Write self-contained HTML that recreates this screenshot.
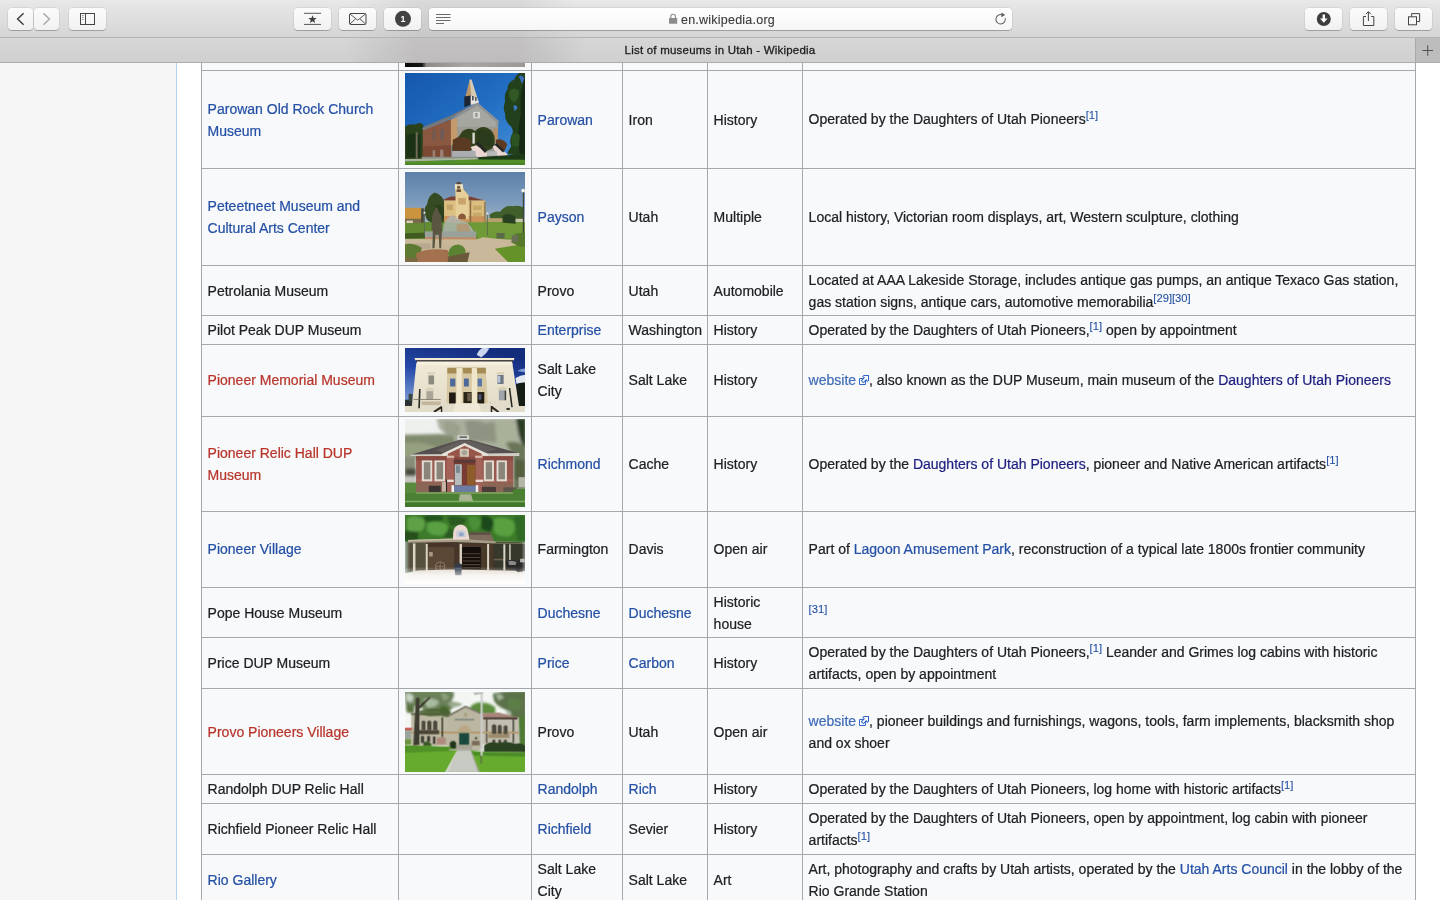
<!DOCTYPE html>
<html lang="en">
<head>
<meta charset="utf-8">
<title>List of museums in Utah - Wikipedia</title>
<style>
html,body{margin:0;padding:0;}
body{width:1440px;height:900px;overflow:hidden;position:relative;background:#fff;font-family:"Liberation Sans",Arial,Helvetica,sans-serif;color:#202122;}
/* ---------- browser chrome ---------- */
#toolbar{will-change:transform;position:absolute;left:0;top:0;width:1440px;height:37px;background:linear-gradient(#e9e9e9 0,#e6e6e6 4px,#d6d6d6 36px);border-bottom:1px solid #b4b4b4;box-sizing:content-box;}
.btn{position:absolute;top:8px;height:22px;box-sizing:border-box;border-radius:4px;background:linear-gradient(#fcfcfc,#f1f1f1);box-shadow:0 0 0 0.5px rgba(0,0,0,.12),0 1px 0.5px rgba(0,0,0,.22);}
.btn svg{position:absolute;left:0;top:0;}
#urlbar{position:absolute;left:429px;top:8px;width:583px;height:22px;border-radius:4px;background:linear-gradient(#ffffff,#f6f6f6);box-shadow:0 0 0 0.5px rgba(0,0,0,.12),0 1px 0.5px rgba(0,0,0,.22);}
#urltext{position:absolute;left:0;top:1px;width:100%;height:22px;line-height:22px;text-align:center;font-size:12.5px;letter-spacing:0.23px;color:#3a3a3a;text-indent:15px;-webkit-text-stroke:0.12px;}
#badge1{position:absolute;left:395px;top:11px;width:16px;height:16px;line-height:16px;text-align:center;color:#fff;font-size:9px;font-weight:bold;}
#tabbar{will-change:transform;position:absolute;left:0;top:38px;width:1440px;height:24px;background:linear-gradient(#d6d6d6,#d0d0d0);border-bottom:1px solid #acacac;}
#tabtitle{position:absolute;left:0;top:0;width:1440px;height:24px;line-height:24px;text-align:center;font-size:11.5px;letter-spacing:0.21px;color:#1e1e1e;-webkit-text-stroke:0.3px;}
#newtab{position:absolute;right:0;top:0;width:25px;height:24px;background:#bdbdbd;border-left:1px solid #a9a9a9;box-sizing:border-box;}
/* ---------- page ---------- */
#page{position:absolute;left:0;top:63px;width:1440px;height:837px;background:#f6f6f6;overflow:hidden;}
#content{position:absolute;left:176px;top:0;width:1264px;height:837px;background:#fff;border-left:1px solid #b4d5f1;box-sizing:border-box;}
table.wt{position:absolute;left:201px;top:-30px;width:1214px;border-collapse:collapse;table-layout:fixed;background:#f8f9fa;font-size:14px;line-height:22px;color:#202122;will-change:transform;-webkit-text-stroke:0.22px;}
table.wt td{border:1px solid #a4a7ab;padding:0 5.6px;vertical-align:middle;box-sizing:border-box;overflow:hidden;}
svg.ph{position:absolute;display:block;overflow:hidden;}
a{color:#2450a6;text-decoration:none;}
a.new{color:#b8342a;}
a.vis{color:#1e1e80;}
a.ext{color:#416cb8;}
svg.xi{display:inline-block;margin-left:2px;margin-right:-1px;vertical-align:-1.5px;}
tr.up1 td{padding-bottom:2px;}
sup{font-size:11.2px;line-height:1;vertical-align:super;position:relative;top:1px;-webkit-text-stroke:0.1px;}
</style>
</head>
<body>
<div id="page">
<div id="content"></div>
<table class="wt">
<colgroup><col style="width:197px"><col style="width:133px"><col style="width:91px"><col style="width:85px"><col style="width:95px"><col style="width:613px"></colgroup>
<tr style="height:37px"><td></td><td></td><td></td><td></td><td></td><td></td></tr>
<tr style="height:98px"><td><a>Parowan Old Rock Church Museum</a></td><td></td><td><a>Parowan</a></td><td>Iron</td><td>History</td><td style="padding-bottom:2px">Operated by the Daughters of Utah Pioneers<sup><a>[1]</a></sup></td></tr>
<tr style="height:97px"><td><a>Peteetneet Museum and Cultural Arts Center</a></td><td></td><td><a>Payson</a></td><td>Utah</td><td>Multiple</td><td>Local history, Victorian room displays, art, Western sculpture, clothing</td></tr>
<tr style="height:50px"><td>Petrolania Museum</td><td></td><td>Provo</td><td>Utah</td><td>Automobile</td><td>Located at AAA Lakeside Storage, includes antique gas pumps, an antique Texaco Gas station, gas station signs, antique cars, automotive memorabilia<sup><a>[29]</a></sup><sup><a>[30]</a></sup></td></tr>
<tr style="height:29px"><td>Pilot Peak DUP Museum</td><td></td><td><a>Enterprise</a></td><td>Washington</td><td>History</td><td>Operated by the Daughters of Utah Pioneers,<sup><a>[1]</a></sup> open by appointment</td></tr>
<tr class="up1" style="height:72px"><td><a class="new">Pioneer Memorial Museum</a></td><td></td><td>Salt Lake City</td><td>Salt Lake</td><td>History</td><td><a class="ext">website<svg class="xi" width="12" height="12" viewBox="0 0 12 12"><path fill="#fff" stroke="#36c" d="M1.5 4.518h5.982V10.500H1.500z"/><path fill="#36c" d="M5.765 1H11v5.390L9.427 7.937l-1.310-1.310L5.393 9.350l-2.690-2.688 2.810-2.808L4.200 2.544z"/><path fill="#fff" d="M9.995 2.004l.022 4.885L8.200 5.070 5.320 7.950 4.090 6.723l2.882-2.880-1.850-1.852z"/></svg></a>, also known as the DUP Museum, main museum of the <a class="vis">Daughters of Utah Pioneers</a></td></tr>
<tr style="height:95px"><td><a class="new">Pioneer Relic Hall DUP Museum</a></td><td></td><td><a>Richmond</a></td><td>Cache</td><td>History</td><td>Operated by the <a class="vis">Daughters of Utah Pioneers</a>, pioneer and Native American artifacts<sup><a>[1]</a></sup></td></tr>
<tr class="up1" style="height:76px"><td><a>Pioneer Village</a></td><td></td><td>Farmington</td><td>Davis</td><td>Open air</td><td>Part of <a>Lagoon Amusement Park</a>, reconstruction of a typical late 1800s frontier community</td></tr>
<tr style="height:50px"><td>Pope House Museum</td><td></td><td><a>Duchesne</a></td><td><a>Duchesne</a></td><td>Historic house</td><td><sup><a>[31]</a></sup></td></tr>
<tr style="height:51px"><td>Price DUP Museum</td><td></td><td><a>Price</a></td><td><a>Carbon</a></td><td>History</td><td>Operated by the Daughters of Utah Pioneers,<sup><a>[1]</a></sup> Leander and Grimes log cabins with historic artifacts, open by appointment</td></tr>
<tr style="height:86px"><td><a class="new">Provo Pioneers Village</a></td><td></td><td>Provo</td><td>Utah</td><td>Open air</td><td><a class="ext">website<svg class="xi" width="12" height="12" viewBox="0 0 12 12"><path fill="#fff" stroke="#36c" d="M1.5 4.518h5.982V10.500H1.500z"/><path fill="#36c" d="M5.765 1H11v5.390L9.427 7.937l-1.310-1.310L5.393 9.350l-2.690-2.688 2.810-2.808L4.200 2.544z"/><path fill="#fff" d="M9.995 2.004l.022 4.885L8.200 5.070 5.320 7.950 4.090 6.723l2.882-2.880-1.850-1.852z"/></svg></a>, pioneer buildings and furnishings, wagons, tools, farm implements, blacksmith shop and ox shoer</td></tr>
<tr style="height:29px"><td>Randolph DUP Relic Hall</td><td></td><td><a>Randolph</a></td><td><a>Rich</a></td><td>History</td><td>Operated by the Daughters of Utah Pioneers, log home with historic artifacts<sup><a>[1]</a></sup></td></tr>
<tr style="height:51px"><td>Richfield Pioneer Relic Hall</td><td></td><td><a>Richfield</a></td><td>Sevier</td><td>History</td><td>Operated by the Daughters of Utah Pioneers, open by appointment, log cabin with pioneer artifacts<sup><a>[1]</a></sup></td></tr>
<tr style="height:51px"><td><a>Rio Gallery</a></td><td></td><td>Salt Lake City</td><td>Salt Lake</td><td>Art</td><td>Art, photography and crafts by Utah artists, operated by the <a>Utah Arts Council</a> in the lobby of the Rio Grande Station</td></tr>
</table>
<!--IMG0--><svg class="ph" style="left:405px;top:0px" width="120" height="4" viewBox="0 0 120 4" preserveAspectRatio="none">
<defs><linearGradient id="g0" x1="0" y1="0" x2="1" y2="0"><stop offset="0" stop-color="#080808"/><stop offset="0.14" stop-color="#141414"/><stop offset="0.18" stop-color="#8e8a89"/><stop offset="0.5" stop-color="#aaa5a3"/><stop offset="1" stop-color="#9c9896"/></linearGradient></defs>
<rect width="120" height="4" fill="url(#g0)"/>
</svg><!--/IMG0-->
<!--IMG1--><svg class="ph" style="left:405px;top:10px" width="120" height="92" viewBox="47 30 1100 840" preserveAspectRatio="none">
<defs>
<linearGradient id="sky1" x1="0" y1="0" x2="1" y2="1"><stop offset="0" stop-color="#1458ad"/><stop offset="0.55" stop-color="#2470c4"/><stop offset="1" stop-color="#4a92dc"/></linearGradient>
<filter id="b1" x="-5%" y="-5%" width="110%" height="110%"><feGaussianBlur stdDeviation="5"/></filter>
</defs>
<rect x="47" y="30" width="1100" height="840" fill="url(#sky1)"/>
<g filter="url(#b1)">
<!-- left trees -->
<path d="M40 520 Q90 490 140 500 Q190 470 215 505 L215 815 L40 815Z" fill="#29421e"/>
<path d="M60 600 Q120 560 190 600 L190 800 L60 800Z" fill="#1e3217"/>
<rect x="145" y="570" width="18" height="240" fill="#6f6a58"/>
<!-- right tree -->
<path d="M1160 20 L1100 28 Q1060 50 1050 90 Q990 110 985 180 Q950 230 965 290 Q940 350 965 400 Q960 460 1000 500 Q1050 540 1030 590 Q1000 640 1020 700 Q990 740 985 770 L1160 795Z" fill="#223f1a"/>
<path d="M1160 60 Q1090 180 1110 400 Q1070 560 1095 760 L1160 785Z" fill="#172c12"/>
<path d="M1000 200 Q1040 150 1090 190 Q1100 260 1050 300 Q1000 290 1000 200Z" fill="#335826"/>
<path d="M1020 600 Q1060 560 1100 600 L1090 700 L1030 700Z" fill="#2f5222"/>
<path d="M1090 60 Q1120 40 1140 80 L1120 130Z" fill="#3a6eb8"/>
<path d="M1040 330 Q1070 310 1080 350 L1050 380Z" fill="#3a78c4"/>
<!-- steeple -->
<polygon points="640,88 658,92 722,292 700,300 600,320" fill="#d6c9b4"/>
<polygon points="640,95 655,240 600,250" fill="#b89468"/>
<polygon points="590,245 650,235 650,320 590,342" fill="#1f2632"/>
<polygon points="650,235 722,285 722,310 650,322" fill="#e9e6df"/>
<rect x="662" y="240" width="14" height="40" fill="#3a4250"/>
<rect x="690" y="250" width="12" height="36" fill="#3a4250"/>
<!-- front gable wall -->
<polygon points="470,455 712,318 902,482 895,800 470,800" fill="#9b9b93"/>
<polygon points="520,440 712,330 880,470 880,520 520,520" fill="#a5a6a0"/>
<!-- roof edge -->
<polygon points="205,535 470,425 712,300 912,470 900,490 712,325 520,425 215,555" fill="#8e9296"/>
<polygon points="215,520 470,415 700,300 470,440 215,545" fill="#6d747a"/>
<!-- side brick wall -->
<polygon points="210,552 470,452 470,812 210,812" fill="#8a583f"/>
<polygon points="210,700 470,690 470,812 210,812" fill="#7b4a36"/>
<rect x="300" y="545" width="26" height="100" fill="#6f5a52"/>
<rect x="372" y="540" width="32" height="100" fill="#6c5a56"/>
<rect x="300" y="735" width="24" height="70" fill="#9a7f74"/>
<rect x="368" y="730" width="32" height="75" fill="#9a7f74"/>
<!-- corner pilaster -->
<polygon points="468,455 525,440 525,640 468,700" fill="#c59a6b"/>
<rect x="855" y="540" width="40" height="110" fill="#b98e62"/>
<!-- gable window -->
<rect x="672" y="385" width="62" height="58" fill="#d7d7d2"/>
<rect x="690" y="395" width="22" height="36" fill="#8f9496"/>
<!-- bushes -->
<path d="M575 560 Q640 520 690 560 Q740 505 800 530 Q870 560 870 640 Q880 720 800 740 L700 700 L640 740 L480 740 Q470 650 540 610Z" fill="#32401f"/>
<path d="M485 640 Q560 590 650 640 L650 740 L485 740Z" fill="#5a3a22"/>
<path d="M880 640 Q940 620 985 680 L960 740 L880 720Z" fill="#5b3a24"/>
<path d="M700 560 Q780 520 850 600 L850 700 L720 690Z" fill="#2a3a1b"/>
<rect x="665" y="575" width="22" height="100" fill="#d9d9d4"/>
<!-- stairs -->
<polygon points="648,705 700,690 800,760 800,800 705,800" fill="#ead6d2"/>
<polygon points="690,665 715,660 800,735 780,760" fill="#262626"/>
<polygon points="850,700 880,690 985,770 985,790 900,795" fill="#ead6d2"/>
<polygon points="865,680 890,675 960,740 945,755" fill="#262626"/>
<!-- porch / fence -->
<rect x="480" y="742" width="215" height="58" fill="#a9adb0"/>
<rect x="800" y="745" width="90" height="40" fill="#b7babb"/>
<!-- hedge -->
<path d="M700 800 L1160 770 L1160 830 L700 825Z" fill="#1f3a18"/>
<rect x="200" y="795" width="520" height="30" fill="#8a8f86"/>
<!-- sidewalk + grass -->
<polygon points="40,815 700,805 700,822 40,840" fill="#a9b59a"/>
<polygon points="40,838 700,820 1160,822 1160,880 40,880" fill="#558f2b"/>
<polygon points="40,858 1160,850 1160,880 40,880" fill="#4a8526"/>
</g>
</svg><!--/IMG1-->
<!--IMG2--><svg class="ph" style="left:405px;top:109px" width="120" height="90" viewBox="47 38 1100 822" preserveAspectRatio="none">
<defs>
<linearGradient id="sky2" x1="0" y1="0" x2="0" y2="1"><stop offset="0" stop-color="#5d80aa"/><stop offset="0.35" stop-color="#7e9cbc"/><stop offset="0.6" stop-color="#a6b8ca"/></linearGradient>
<filter id="b2" x="-5%" y="-5%" width="110%" height="110%"><feGaussianBlur stdDeviation="5"/></filter>
</defs>
<rect x="47" y="38" width="1100" height="822" fill="url(#sky2)"/>
<g filter="url(#b2)">
<!-- lawn -->
<rect x="40" y="640" width="1120" height="230" fill="#c6b698"/>
<rect x="40" y="495" width="1120" height="160" fill="#648c32"/>
<path d="M640 500 L1160 495 L1160 640 L900 650 L720 640Z" fill="#709a38"/>
<path d="M40 600 L230 590 L230 640 L40 645Z" fill="#3f5a22"/>
<!-- left building -->
<rect x="40" y="365" width="155" height="105" fill="#c9943c"/>
<rect x="40" y="465" width="165" height="40" fill="#7a6a48"/>
<rect x="60" y="482" width="60" height="22" fill="#d8d0b8"/>
<rect x="195" y="370" width="25" height="130" fill="#4a4a3a"/>
<!-- tree -->
<path d="M320 225 Q400 250 410 330 Q460 380 440 460 Q400 520 330 500 Q250 510 235 440 Q210 380 250 330 Q260 250 320 225Z" fill="#364c21"/>
<path d="M330 330 Q420 340 430 440 Q380 500 300 480Z" fill="#2c3f1b"/>
<!-- right trees -->
<path d="M820 430 Q860 390 920 400 Q960 340 1030 350 Q1080 340 1130 360 L1130 470 Q1060 520 940 500 L830 470Z" fill="#3f5f2a"/>
<path d="M940 440 Q1000 400 1060 450 L1060 510 L950 500Z" fill="#2a4020"/>
<rect x="780" y="460" width="160" height="35" fill="#b8a070"/>
<rect x="1060" y="465" width="80" height="30" fill="#c8c4b0"/>
<!-- main building -->
<polygon points="400,290 470,262 640,262 770,295 770,300 400,300" fill="#7a4230"/>
<rect x="405" y="298" width="375" height="198" fill="#dcbf80"/>
<rect x="405" y="440" width="375" height="56" fill="#c9935a"/>
<rect x="640" y="300" width="14" height="195" fill="#8a6a40"/>
<rect x="770" y="310" width="18" height="186" fill="#9a8458"/>
<polygon points="505,150 575,150 585,200 630,250 630,470 510,470 510,250" fill="#e6cf98"/>
<rect x="520" y="130" width="40" height="30" fill="#5a4a38"/>
<rect x="520" y="195" width="40" height="25" fill="#6a4a30"/>
<rect x="505" y="150" width="70" height="45" fill="#efe6c8"/>
<rect x="525" y="165" width="28" height="26" fill="#7a5a3a"/>
<rect x="535" y="275" width="70" height="60" fill="#c9a46c"/>
<rect x="430" y="335" width="55" height="50" fill="#c4a468"/>
<rect x="670" y="345" width="80" height="40" fill="#c8a868"/>
<rect x="670" y="410" width="80" height="35" fill="#c8a868"/>
<path d="M535 470 L535 440 Q570 395 605 440 L605 470Z" fill="#8a5a3a"/>
<!-- fountain -->
<path d="M390 620 L400 520 Q440 440 480 430 Q520 450 560 480 L620 500 Q660 540 690 600 L690 640 L390 640Z" fill="#b2b8b4" opacity="0.8"/>
<path d="M520 520 Q570 490 630 520 L650 600 L520 600Z" fill="#b09a78"/>
<rect x="230" y="580" width="470" height="60" fill="#9aa09a"/>
<rect x="230" y="635" width="470" height="55" fill="#c08a60"/>
<!-- lampposts -->
<rect x="1127" y="225" width="11" height="480" fill="#3f4236"/>
<circle cx="1130" cy="207" r="17" fill="#f0f0e6"/>
<rect x="798" y="420" width="8" height="200" fill="#5a6a50"/>
<circle cx="802" cy="418" r="10" fill="#e8e8e0"/>
<rect x="222" y="410" width="8" height="200" fill="#5a6a50"/>
<circle cx="226" cy="410" r="10" fill="#e8e8e0"/>
<!-- path -->
<path d="M40 650 L700 655 L760 635 L1000 660 L1060 700 L880 735 L1000 860 L600 860 L640 760 L500 700 L40 700Z" fill="#c9b99a"/>
<path d="M40 690 L280 690 L280 740 L40 740Z" fill="#b8a890"/>
<!-- bottom right grass -->
<path d="M870 740 L1080 705 L1160 720 L1160 870 L1000 870Z" fill="#66922c"/>
<path d="M1060 600 L1160 590 L1160 720 L1100 720 L1020 680Z" fill="#55782a"/>
<rect x="885" y="595" width="75" height="50" fill="#5a6a4a"/>
<rect x="1025" y="615" width="60" height="60" fill="#6a7058"/>
<!-- statue -->
<path d="M328 362 Q350 358 352 395 L380 440 L386 560 L378 735 L362 735 L356 610 L326 610 L318 735 L298 735 L302 580 L290 560 L296 440 Z" fill="#5a5642"/>
<!-- bottom-left -->
<path d="M40 700 Q120 680 200 730 L190 800 L120 860 L40 860Z" fill="#5d7a30"/>
<path d="M150 780 Q250 730 440 750 L450 860 L150 860Z" fill="#a3714e"/>
<path d="M440 780 Q460 700 540 700 Q620 720 600 800 L450 815Z" fill="#5c8332"/>
<path d="M440 810 L640 770 L620 860 L440 860Z" fill="#6b5a3a"/>
<rect x="40" y="820" width="120" height="40" fill="#7a6a40"/>
</g>
</svg><!--/IMG2-->
<!--IMG3--><svg class="ph" style="left:405px;top:285px" width="120" height="64" viewBox="55 45 1330 712" preserveAspectRatio="none">
<defs>
<linearGradient id="sky3" x1="0.6" y1="0" x2="0.2" y2="1"><stop offset="0" stop-color="#142c7c"/><stop offset="0.45" stop-color="#2449a8"/><stop offset="1" stop-color="#8aa8dc"/></linearGradient>
<linearGradient id="bd3" x1="0" y1="0" x2="0" y2="1"><stop offset="0" stop-color="#efe9d6"/><stop offset="1" stop-color="#e2dbc8"/></linearGradient>
<filter id="b3" x="-5%" y="-5%" width="110%" height="110%"><feGaussianBlur stdDeviation="5.5"/></filter>
</defs>
<rect x="55" y="45" width="1330" height="712" fill="url(#sky3)"/>
<g filter="url(#b3)">
<!-- clouds -->
<path d="M850 120 Q870 60 930 40 L990 50 Q960 110 900 150Z" fill="#c9d6ee"/>
<path d="M1280 380 Q1330 350 1400 340 L1400 440 L1290 440Z" fill="#e4e8f0"/>
<path d="M1300 300 Q1350 270 1400 275 L1400 320 Z" fill="#7f9ad6"/>
<!-- right dark tree -->
<path d="M1285 450 Q1340 420 1400 430 L1400 760 L1300 720Z" fill="#161c16"/>
<!-- left dark -->
<rect x="40" y="620" width="100" height="75" fill="#2a3030"/>
<rect x="95" y="555" width="45" height="80" fill="#3a4444"/>
<!-- building -->
<polygon points="180,215 1245,215 1320,700 130,700" fill="url(#bd3)"/>
<polygon points="160,155 1268,155 1262,182 168,182" fill="#f2ead2"/>
<polygon points="178,180 1252,180 1250,196 180,196" fill="#4a3a1c"/>
<polygon points="188,196 1242,196 1246,232 184,232" fill="#f7f1de"/>
<!-- portico recess -->
<polygon points="525,265 950,265 972,660 515,660" fill="#d6c8a2"/>
<polygon points="525,265 950,265 952,330 523,330" fill="#a58c54"/>
<rect x="625" y="268" width="68" height="420" fill="#efe6cc"/>
<rect x="795" y="268" width="58" height="420" fill="#efe6cc"/>
<rect x="684" y="300" width="16" height="380" fill="#d8c8a0"/>
<!-- portico windows -->
<rect x="555" y="385" width="58" height="88" fill="#4e689a"/>
<rect x="708" y="385" width="54" height="88" fill="#4e689a"/>
<rect x="860" y="385" width="48" height="88" fill="#5a78aa"/>
<!-- doors -->
<rect x="543" y="540" width="74" height="122" fill="#241d12"/>
<rect x="703" y="535" width="90" height="127" fill="#2a2216"/>
<rect x="858" y="535" width="76" height="127" fill="#261f14"/>
<rect x="745" y="545" width="40" height="90" fill="#6a5a4a"/>
<rect x="870" y="560" width="30" height="60" fill="#4a5a7a"/>
<!-- side windows -->
<rect x="300" y="315" width="88" height="22" fill="#d8cfb6"/>
<rect x="315" y="350" width="62" height="100" fill="#8b8a7c"/>
<rect x="1068" y="315" width="88" height="22" fill="#d8cfb6"/>
<rect x="1080" y="345" width="68" height="100" fill="#6d7484"/>
<rect x="1082" y="355" width="30" height="75" fill="#b8c4d8"/>
<rect x="292" y="525" width="76" height="90" fill="#a9a698"/>
<rect x="1095" y="515" width="78" height="112" fill="#9fa4aa"/>
<rect x="1160" y="520" width="16" height="105" fill="#3a3a34"/>
<path d="M285 500 Q330 470 378 500 L378 520 L285 520Z" fill="#d9d0b8"/>
<path d="M1085 495 Q1135 465 1185 495 L1185 512 L1085 512Z" fill="#d9d0b8"/>
<!-- steps & ground -->
<polygon points="40,690 1400,690 1400,770 40,770" fill="#e2dccb"/>
<polygon points="615,660 870,660 900,760 590,760" fill="#efe8d6"/>
<!-- railings -->
<polygon points="210,500 228,500 220,715 202,715" fill="#2a2a26"/>
<rect x="150" y="612" width="300" height="8" fill="#6a665c"/>
<rect x="240" y="640" width="210" height="40" fill="#c4b69a"/>
<polygon points="368,750 455,690 468,700 468,760 452,760 452,720 385,762" fill="#2a261c"/>
<polygon points="1005,690 1022,690 1100,752 1085,765 1022,720 1022,760 1005,760" fill="#2a261c"/>
<polygon points="1205,490 1222,490 1250,705 1232,705" fill="#2a2a26"/>
<rect x="1180" y="712" width="36" height="22" fill="#2a2a22"/>
<circle cx="1002" cy="652" r="12" fill="#d8c8b0"/>
</g>
</svg><!--/IMG3-->
<!--IMG4--><svg class="ph" style="left:405px;top:356px" width="120" height="88" viewBox="47 38 1113 820" preserveAspectRatio="none">
<defs>
<filter id="b4" x="-5%" y="-5%" width="110%" height="110%"><feGaussianBlur stdDeviation="5"/></filter>
<filter id="b4b" x="-10%" y="-10%" width="120%" height="120%"><feGaussianBlur stdDeviation="14"/></filter>
</defs>
<rect x="47" y="38" width="1113" height="820" fill="#eef0ee"/>
<g filter="url(#b4b)">
<!-- hill -->
<path d="M30 185 L300 180 Q420 170 540 200 L540 400 L30 400Z" fill="#7f8a6e"/>
<path d="M30 260 Q200 240 330 300 L330 400 L30 400Z" fill="#95a080"/>
<!-- background trees -->
<path d="M340 30 L1170 30 L1170 380 L540 380 L500 200 Q400 180 360 120Z" fill="#a9af9d"/>
<path d="M600 60 Q700 30 800 80 Q900 40 960 120 L940 260 L640 240Z" fill="#8f9482"/>
<path d="M880 60 Q980 40 1060 100 L1080 300 L900 280Z" fill="#a8b298"/>
<path d="M400 60 Q500 40 560 110 L540 200 L420 170Z" fill="#9aa08c"/>
<path d="M1075 30 L1170 30 L1170 330 Q1110 250 1095 150Z" fill="#2c3c22"/>
<path d="M980 260 Q1080 230 1170 300 L1170 700 L1050 700 L1050 380Z" fill="#6a7658"/>
<path d="M1060 420 Q1120 400 1170 430 L1170 600 L1060 600Z" fill="#55603f"/>
<!-- left side -->
<path d="M30 390 L150 390 L150 640 L30 640Z" fill="#868c78"/>
<rect x="30" y="570" width="125" height="60" fill="#c8c8c4"/>
<rect x="50" y="500" width="100" height="70" fill="#4a4a3c"/>
</g>
<g filter="url(#b4)">
<rect x="1100" y="580" width="60" height="95" fill="#b4b6a8"/>
<!-- cupola -->
<rect x="535" y="190" width="105" height="42" fill="#d8dad6"/>
<rect x="552" y="200" width="70" height="14" fill="#5a5a58"/>
<!-- roof -->
<polygon points="100,372 555,232 655,232 1105,358 1105,382 100,384" fill="#565050"/>
<polygon points="330,330 555,240 655,240 900,320 800,350 600,270 410,352" fill="#645e5c"/>
<polygon points="98,368 1108,355 1108,382 98,385" fill="#cfccc4"/>
<!-- walls -->
<rect x="150" y="385" width="900" height="340" fill="#99594d"/>
<rect x="150" y="385" width="900" height="40" fill="#8a4c40"/>
<rect x="150" y="630" width="900" height="95" fill="#8b6656"/>
<rect x="150" y="600" width="900" height="22" fill="#a8645a"/>
<!-- pediment -->
<polygon points="390,362 600,262 815,362 815,380 390,380" fill="#e6e2da"/>
<polygon points="445,362 600,288 758,362 758,385 445,385" fill="#97574a"/>
<rect x="555" y="315" width="85" height="75" fill="#d6c8b8"/>
<circle cx="598" cy="352" r="26" fill="#a8a49a"/>
<!-- pillars -->
<rect x="435" y="380" width="68" height="345" fill="#a36358"/>
<rect x="698" y="380" width="68" height="345" fill="#a36358"/>
<rect x="435" y="380" width="68" height="20" fill="#d8b8a8"/>
<rect x="698" y="380" width="68" height="20" fill="#d8b8a8"/>
<rect x="430" y="603" width="78" height="22" fill="#e8dcd4"/>
<rect x="694" y="603" width="78" height="22" fill="#e8dcd4"/>
<!-- entrance recess -->
<rect x="500" y="420" width="200" height="240" fill="#7a3a32"/>
<rect x="500" y="415" width="200" height="30" fill="#5a3a38"/>
<rect x="508" y="460" width="66" height="195" fill="#b4bcbc"/>
<rect x="520" y="470" width="36" height="70" fill="#7a8890"/>
<rect x="622" y="465" width="76" height="190" fill="#8d5c2c"/>
<!-- windows -->
<g fill="#e2dcd4"><rect x="203" y="424" width="97" height="195"/><rect x="320" y="424" width="98" height="195"/><rect x="778" y="424" width="94" height="195"/><rect x="896" y="424" width="96" height="195"/></g>
<g fill="#8a8578"><rect x="222" y="440" width="60" height="160"/><rect x="340" y="440" width="60" height="160"/><rect x="796" y="440" width="58" height="160"/><rect x="914" y="440" width="60" height="160"/></g>
<!-- steps -->
<rect x="500" y="658" width="205" height="80" fill="#6c7ca4"/>
<rect x="478" y="655" width="24" height="85" fill="#f0f0ec"/>
<rect x="703" y="655" width="24" height="85" fill="#f0f0ec"/>
<rect x="390" y="625" width="38" height="90" fill="#c8b4a4"/>
<rect x="268" y="660" width="110" height="60" fill="#3a3230"/>
<rect x="760" y="670" width="130" height="55" fill="#4a3a34"/>
<rect x="960" y="675" width="120" height="50" fill="#5a5448"/>
<rect x="427" y="600" width="10" height="120" fill="#2a2624"/>
<!-- lawn -->
<rect x="30" y="725" width="1150" height="150" fill="#4b8035"/>
<rect x="30" y="630" width="120" height="100" fill="#5a8a3c"/>
<rect x="1050" y="690" width="120" height="50" fill="#4a8030"/>
<rect x="150" y="718" width="900" height="18" fill="#7a9a5a"/>
<polygon points="555,740 660,740 680,808 545,808" fill="#a9b394"/>
<rect x="30" y="800" width="1150" height="16" fill="#7fae62"/>
<rect x="30" y="816" width="1150" height="50" fill="#41782e"/>
</g>
</svg><!--/IMG4-->
<!--IMG5--><svg class="ph" style="left:405px;top:452px" width="120" height="69" viewBox="55 45 1330 765" preserveAspectRatio="none">
<defs>
<filter id="b5" x="-5%" y="-5%" width="110%" height="110%"><feGaussianBlur stdDeviation="5.5"/></filter>
<filter id="b5b" x="-10%" y="-10%" width="120%" height="120%"><feGaussianBlur stdDeviation="14"/></filter>
<linearGradient id="fade5" x1="0" y1="0" x2="0" y2="1"><stop offset="0" stop-color="#fff" stop-opacity="0"/><stop offset="0.75" stop-color="#fff" stop-opacity="0"/><stop offset="0.88" stop-color="#fff" stop-opacity="0.6"/><stop offset="1" stop-color="#fff" stop-opacity="1"/></linearGradient>
<linearGradient id="fade5l" x1="0" y1="0" x2="1" y2="0"><stop offset="0" stop-color="#fff" stop-opacity="0.85"/><stop offset="0.04" stop-color="#fff" stop-opacity="0"/><stop offset="0.97" stop-color="#fff" stop-opacity="0"/><stop offset="1" stop-color="#fff" stop-opacity="0.7"/></linearGradient>
</defs>
<rect x="55" y="45" width="1330" height="765" fill="#3f7d2e"/>
<rect x="55" y="330" width="60" height="360" fill="#4a5a40"/>
<g filter="url(#b5b)">
<path d="M40 40 L1400 40 L1400 340 L40 340Z" fill="#3c7a2c"/>
<path d="M80 80 Q160 40 260 90 Q300 160 240 220 Q140 260 80 200Z" fill="#5fa046"/>
<path d="M300 140 Q400 90 520 150 Q560 230 470 270 Q340 280 300 220Z" fill="#58a042"/>
<path d="M260 60 Q360 30 480 60 L470 110 L280 120Z" fill="#24521c"/>
<path d="M520 60 Q640 40 740 90 L700 160 L560 170Z" fill="#2a5a20"/>
<path d="M760 70 Q840 40 900 110 Q900 200 820 220 Q760 180 760 70Z" fill="#4c9038"/>
<path d="M900 50 Q1000 40 1040 130 L1000 240 L900 200Z" fill="#1f4a1a"/>
<path d="M1040 90 Q1160 50 1260 120 Q1300 220 1220 280 Q1100 300 1040 230Z" fill="#58a040"/>
<path d="M1260 60 L1400 50 L1400 330 L1300 330Z" fill="#2f6a26"/>
<path d="M40 220 L200 230 L200 330 L40 330Z" fill="#25501e"/>
<path d="M540 190 Q600 170 600 300 L480 300Z" fill="#2a5a22"/>
</g>
<g filter="url(#b5)">
<!-- under awning dark -->
<rect x="90" y="345" width="1300" height="320" fill="#46362a"/>
<rect x="90" y="345" width="200" height="320" fill="#54503e"/>
<rect x="1040" y="360" width="350" height="300" fill="#36382a"/>
<rect x="310" y="400" width="290" height="250" fill="#5a4636"/>
<rect x="690" y="400" width="205" height="250" fill="#16110d"/>
<g fill="#5a4a3c"><rect x="695" y="470" width="195" height="10"/><rect x="695" y="510" width="195" height="10"/><rect x="695" y="550" width="195" height="10"/><rect x="695" y="590" width="195" height="12"/><rect x="695" y="625" width="195" height="10"/></g>
<rect x="900" y="380" width="130" height="270" fill="#4a3a2c"/>
<rect x="1040" y="530" width="110" height="18" fill="#6a6050"/>
<rect x="322" y="455" width="40" height="50" fill="#a89880"/>
<!-- roof shingles -->
<polygon points="765,235 1000,235 1045,335 765,335" fill="#7d6c5c"/>
<polygon points="765,235 1000,235 1010,265 765,265" fill="#5c5046"/>
<!-- awning -->
<polygon points="88,322 600,305 1060,335 1385,345 1385,365 1060,362 600,345 92,352" fill="#a59d86"/>
<polygon points="88,322 580,305 580,322 90,336" fill="#c4bca6"/>
<polygon points="1060,340 1385,347 1385,362 1060,358" fill="#4a5a3a"/>
<!-- sign -->
<path d="M585 320 L590 235 Q600 160 672 150 Q745 160 755 235 L770 320Z" fill="#ead9d0"/>
<path d="M620 230 Q672 200 730 230 L725 290 L625 290Z" fill="#c9cdd6"/>
<rect x="655" y="240" width="50" height="40" fill="#8fa6c8"/>
<!-- posts -->
<g fill="#dcd4c4"><rect x="143" y="360" width="28" height="320"/><rect x="285" y="365" width="22" height="300"/><rect x="660" y="365" width="26" height="230"/><rect x="965" y="365" width="22" height="290"/><rect x="1145" y="370" width="22" height="290"/><rect x="1210" y="370" width="16" height="200"/></g>
<!-- wheel -->
<circle cx="445" cy="615" r="52" fill="none" stroke="#8a7460" stroke-width="12"/>
<rect x="440" y="565" width="10" height="100" fill="#8a7460"/><rect x="395" y="610" width="100" height="10" fill="#8a7460"/>
<!-- ground -->
<polygon points="55,690 200,660 560,650 900,655 1385,665 1385,820 55,820" fill="#e6ddd4"/>
<polygon points="55,690 1385,700 1385,820 55,820" fill="#ece6e0"/>
<!-- barrel -->
<path d="M600 590 Q640 570 685 590 L680 712 L612 712Z" fill="#363c4c"/>
<rect x="602" y="630" width="82" height="12" fill="#4e5668"/>
<!-- motorcycles -->
<path d="M1170 560 Q1240 520 1300 560 Q1360 520 1385 540 L1385 660 Q1330 690 1290 660 L1180 640Z" fill="#2a2a2a"/>
<path d="M1200 560 Q1250 540 1290 570 L1280 600 L1210 600Z" fill="#8a8a88"/>
<circle cx="1310" cy="655" r="24" fill="#1c1c1c"/>
<rect x="1330" y="530" width="50" height="40" fill="#b0b0b0"/>
</g>
<rect x="55" y="45" width="1330" height="765" fill="url(#fade5)"/>
<rect x="55" y="340" width="1330" height="470" fill="url(#fade5l)" opacity="0.6"/>
</svg><!--/IMG5-->
<!--IMG6--><svg class="ph" style="left:405px;top:629px" width="120" height="80" viewBox="52 42 1226 815" preserveAspectRatio="none">
<defs>
<filter id="b6" x="-5%" y="-5%" width="110%" height="110%"><feGaussianBlur stdDeviation="5"/></filter>
<filter id="b6b" x="-10%" y="-10%" width="120%" height="120%"><feGaussianBlur stdDeviation="12"/></filter>
</defs>
<rect x="52" y="42" width="1226" height="815" fill="#f3f6f3"/>
<g filter="url(#b6b)">
<!-- middle trees -->
<path d="M715 200 Q760 140 840 150 Q920 150 975 200 L975 270 L720 270Z" fill="#5c8c3e"/>
<!-- left tree foliage -->
<path d="M40 30 L540 30 Q570 80 520 140 Q600 150 640 170 L540 200 Q500 250 420 230 Q340 280 240 230 L200 170 Q120 220 60 170Z" fill="#4d6638" opacity="0.82"/>
<path d="M240 120 Q330 90 400 140 Q380 200 280 200Z" fill="#a9bca0"/>
<path d="M60 60 Q110 40 140 90 L120 150 L70 130Z" fill="#c8d4c4"/>
<path d="M420 60 Q470 50 500 100 L450 130Z" fill="#8aa27a"/>
<path d="M480 150 Q560 150 620 175 L540 200Z" fill="#9cb090"/>
<path d="M60 180 Q110 160 150 200 L140 260 L70 250Z" fill="#5a7040"/>
<path d="M420 180 Q500 170 520 260 L440 300 L400 250Z" fill="#4a6a30"/>
<!-- right tree foliage -->
<path d="M950 60 Q1020 30 1290 30 L1290 340 Q1220 300 1180 320 Q1100 300 1080 220 Q1000 200 960 130Z" fill="#3f5a2b" opacity="0.85"/>
<path d="M1100 120 Q1180 90 1240 150 L1220 230 L1120 220Z" fill="#5c7e46"/>
<path d="M980 70 Q1030 50 1060 100 L1010 130Z" fill="#a0b498"/>
<path d="M1080 230 Q1120 220 1140 270 L1090 290Z" fill="#b8c4b0"/>
<path d="M1200 300 L1290 280 L1290 600 L1220 600Z" fill="#4f7a34"/>
</g>
<g filter="url(#b6)">
<!-- left trunk -->
<!-- building -->
<rect x="115" y="262" width="390" height="330" fill="#bdb9a4"/>
<rect x="115" y="255" width="390" height="22" fill="#6a6a4a"/>
<polygon points="490,290 670,190 845,270 845,625 490,625" fill="#bab6a2"/>
<polygon points="480,282 670,180 850,262 850,280 670,200 490,300" fill="#7a7a68"/>
<rect x="840" y="300" width="375" height="275" fill="#c2beb0"/>
<polygon points="830,258 1010,250 1200,300 1200,322 850,310" fill="#a8877a"/>
<rect x="850" y="300" width="350" height="20" fill="#4a3a34"/>
<rect x="880" y="310" width="14" height="250" fill="#4a4438"/>
<rect x="1152" y="320" width="14" height="240" fill="#3a382c"/>
<!-- tan band -->
<rect x="115" y="445" width="1100" height="20" fill="#b49a70"/>
<!-- left windows -->
<g fill="#4c4a3e"><path d="M222 430 L222 345 Q240 320 260 345 L260 430Z"/><path d="M280 430 L280 345 Q300 320 322 345 L322 430Z"/><path d="M340 430 L340 345 Q360 320 382 345 L382 430Z"/></g>
<rect x="195" y="430" width="205" height="42" fill="#4a4434"/>
<g fill="#3c3a30"><rect x="215" y="490" width="32" height="70"/><rect x="278" y="490" width="30" height="60"/><rect x="338" y="495" width="24" height="75"/></g>
<rect x="425" y="300" width="16" height="200" fill="#3a3c2c"/>
<rect x="375" y="505" width="95" height="70" fill="#b08c7c"/>
<!-- right windows -->
<g fill="#4a483c"><path d="M940 470 L940 385 Q962 355 985 385 L985 470Z"/><path d="M1000 470 L1000 390 Q1020 362 1040 390 L1040 470Z"/><path d="M1060 475 L1060 395 Q1080 365 1100 395 L1100 475Z"/></g>
<rect x="905" y="470" width="215" height="40" fill="#9a8a6a"/>
<g fill="#4a483c"><rect x="945" y="528" width="30" height="30"/><rect x="1005" y="528" width="30" height="30"/><rect x="1062" y="528" width="30" height="30"/></g>
<!-- entrance -->
<path d="M598 465 L598 420 Q660 340 722 420 L722 465Z" fill="#b8a684"/>
<rect x="560" y="318" width="200" height="10" fill="#5a6a6a"/>
<rect x="655" y="255" width="30" height="40" fill="#a8a080"/>
<rect x="605" y="460" width="102" height="122" fill="#1d4a3c"/>
<rect x="575" y="580" width="165" height="45" fill="#a8a494"/>
<rect x="735" y="540" width="80" height="45" fill="#7a6a58"/>
<circle cx="778" cy="512" r="12" fill="#3a3a30"/>
<!-- trunk -->
<polygon points="165,100 200,100 198,580 138,585 152,300" fill="#3c3c30"/>
<polygon points="190,190 300,90 312,102 200,215" fill="#3a3a2c"/>
<path d="M200 230 Q330 200 470 215 L520 250 L480 300 L420 285 L300 290 L205 270Z" fill="#4a6234" opacity="0.85"/>
<!-- bushes -->
<path d="M860 590 Q900 540 1000 560 Q1100 540 1180 570 Q1250 550 1290 600 L1290 655 L860 650Z" fill="#2b4220"/>
<path d="M510 560 Q545 520 575 560 L572 620 L512 620Z" fill="#24361c"/>
<path d="M240 560 Q280 530 320 570 L320 595 L240 595Z" fill="#3a5a28"/>
<!-- left bits -->
<rect x="40" y="408" width="82" height="24" fill="#c23a34"/>
<rect x="40" y="430" width="75" height="90" fill="#9aa49a"/>
<rect x="40" y="520" width="75" height="60" fill="#6c9440"/>
<!-- lawn -->
<polygon points="40,585 500,600 590,635 720,635 860,650 1290,655 1290,870 40,870" fill="#66aa2e"/>
<polygon points="40,585 500,600 560,640 40,660" fill="#4f9226"/>
<polygon points="730,650 1290,660 1290,700 760,690" fill="#4c8c26"/>
<!-- path -->
<polygon points="590,635 722,635 818,860 462,860" fill="#c6cac2"/>
<polygon points="575,650 590,635 480,860 462,860" fill="#e2e4dc"/>
<polygon points="722,635 735,650 818,860 800,860" fill="#9aa48a"/>
<rect x="500" y="625" width="320" height="14" fill="#a8aa9c"/>
<!-- pole -->
<rect x="824" y="45" width="22" height="650" fill="#cdcfcd"/>
<polygon points="750,48 850,42 850,58 765,72" fill="#b5b7b5"/>
<rect x="820" y="690" width="18" height="80" fill="#5a7a3a"/>
</g>
</svg><!--/IMG6-->
</div>
<div id="toolbar">
<div style="position:absolute;left:350px;top:0;width:230px;height:37px;background:linear-gradient(90deg,rgba(80,70,70,0),rgba(80,70,70,.09) 30%,rgba(80,70,70,.09) 72%,rgba(80,70,70,0));"></div>
<div class="btn" style="left:8px;width:25px"></div>
<div class="btn" style="left:34px;width:25px"></div>
<div class="btn" style="left:69px;width:37px"></div>
<div class="btn" style="left:294px;width:37px"></div>
<div class="btn" style="left:339px;width:37px"></div>
<div class="btn" style="left:384px;width:37px"></div>
<div id="urlbar"><div id="urltext">en.wikipedia.org</div></div>
<div class="btn" style="left:1305px;width:37px"></div>
<div class="btn" style="left:1350px;width:37px"></div>
<div class="btn" style="left:1395px;width:37px"></div>
<svg id="icons" width="1440" height="37" viewBox="0 0 1440 37" style="position:absolute;left:0;top:0" fill="none" stroke-linecap="butt">
<!-- back / forward -->
<polyline points="23.6,13.2 17.6,19 23.6,24.8" stroke="#3f3f3f" stroke-width="1.5" stroke-linejoin="miter"/>
<polyline points="43.4,13.2 49.4,19 43.4,24.8" stroke="#a9a9a9" stroke-width="1.5" stroke-linejoin="miter"/>
<!-- sidebar -->
<rect x="80.5" y="13.5" width="14" height="11" stroke="#444" stroke-width="1"/>
<line x1="85.5" y1="13.5" x2="85.5" y2="24.5" stroke="#444" stroke-width="1"/>
<path d="M82 15.5h1.6M82 17.5h1.6M82 19.5h1.6" stroke="#777" stroke-width="0.8"/>
<!-- bookmarks -->
<path d="M304 13.3h17M304 24.4h17" stroke="#555" stroke-width="1"/>
<polygon points="312.5,15.2 313.6,18.0 316.6,18.1 314.3,20.0 315.1,22.9 312.5,21.3 309.9,22.9 310.7,20.0 308.4,18.1 311.4,18.0" fill="#3f3f3f"/>
<!-- mail -->
<rect x="349.5" y="13.5" width="16.5" height="11" rx="1.3" stroke="#444" stroke-width="1"/>
<path d="M350 14l7.75 6.2L365.5 14M350 24l5.6-5.2M365.5 24l-5.6-5.2" stroke="#444" stroke-width="0.9"/>
<!-- 1 badge -->
<circle cx="403" cy="18.8" r="8" fill="#424242"/>
<!-- reader -->
<path d="M436 14.5h14.5M436 17.5h14.5M436 20.5h14.5M436 23.5h8" stroke="#6a6a6a" stroke-width="1"/>
<!-- lock -->
<rect x="669" y="18" width="8.2" height="5.8" rx="0.6" fill="#8c8c8c"/>
<path d="M670.8 18.2v-1.6a2.3 2.3 0 0 1 4.6 0v1.6" stroke="#8c8c8c" stroke-width="1.1"/>
<!-- reload -->
<path d="M1002.6 15a4.7 4.7 0 1 0 2.6 3.2" stroke="#606060" stroke-width="1.05"/>
<polygon points="1001.4,12.4 1005.2,14.9 1001.4,17.3" fill="#606060"/>
<!-- download -->
<circle cx="1323.8" cy="19" r="7" fill="#3d3d3d"/>
<path d="M1322.6 14.6h2.4v4h2.6l-3.8 4.2-3.8-4.2h2.6z" fill="#fff"/>
<!-- share -->
<path d="M1366 16.5h-2.6v9h10.4v-9h-2.6" stroke="#444" stroke-width="1"/>
<path d="M1368.4 21v-9M1365.9 14.2l2.5-2.6 2.5 2.6" stroke="#444" stroke-width="1"/>
<!-- tabs -->
<rect x="1408.5" y="16.8" width="8" height="8" stroke="#444" stroke-width="1"/>
<path d="M1411.6 16.6v-3h8v8h-3" stroke="#444" stroke-width="1"/>
</svg>
<div id="badge1">1</div>
</div>
<div id="tabbar"><div style="position:absolute;left:345px;top:0;width:240px;height:24px;background:linear-gradient(90deg,rgba(80,66,66,0),rgba(80,66,66,.14) 30%,rgba(80,66,66,.14) 72%,rgba(80,66,66,0));"></div><div id="tabtitle">List of museums in Utah - Wikipedia</div><div id="newtab"><svg width="25" height="24" viewBox="0 0 25 24" style="position:absolute;left:-1px;top:0"><path d="M12.75 7.2v10.6M7.4 12.5h10.6" stroke="#505050" stroke-width="1" fill="none"/></svg></div></div>
</body>
</html>
